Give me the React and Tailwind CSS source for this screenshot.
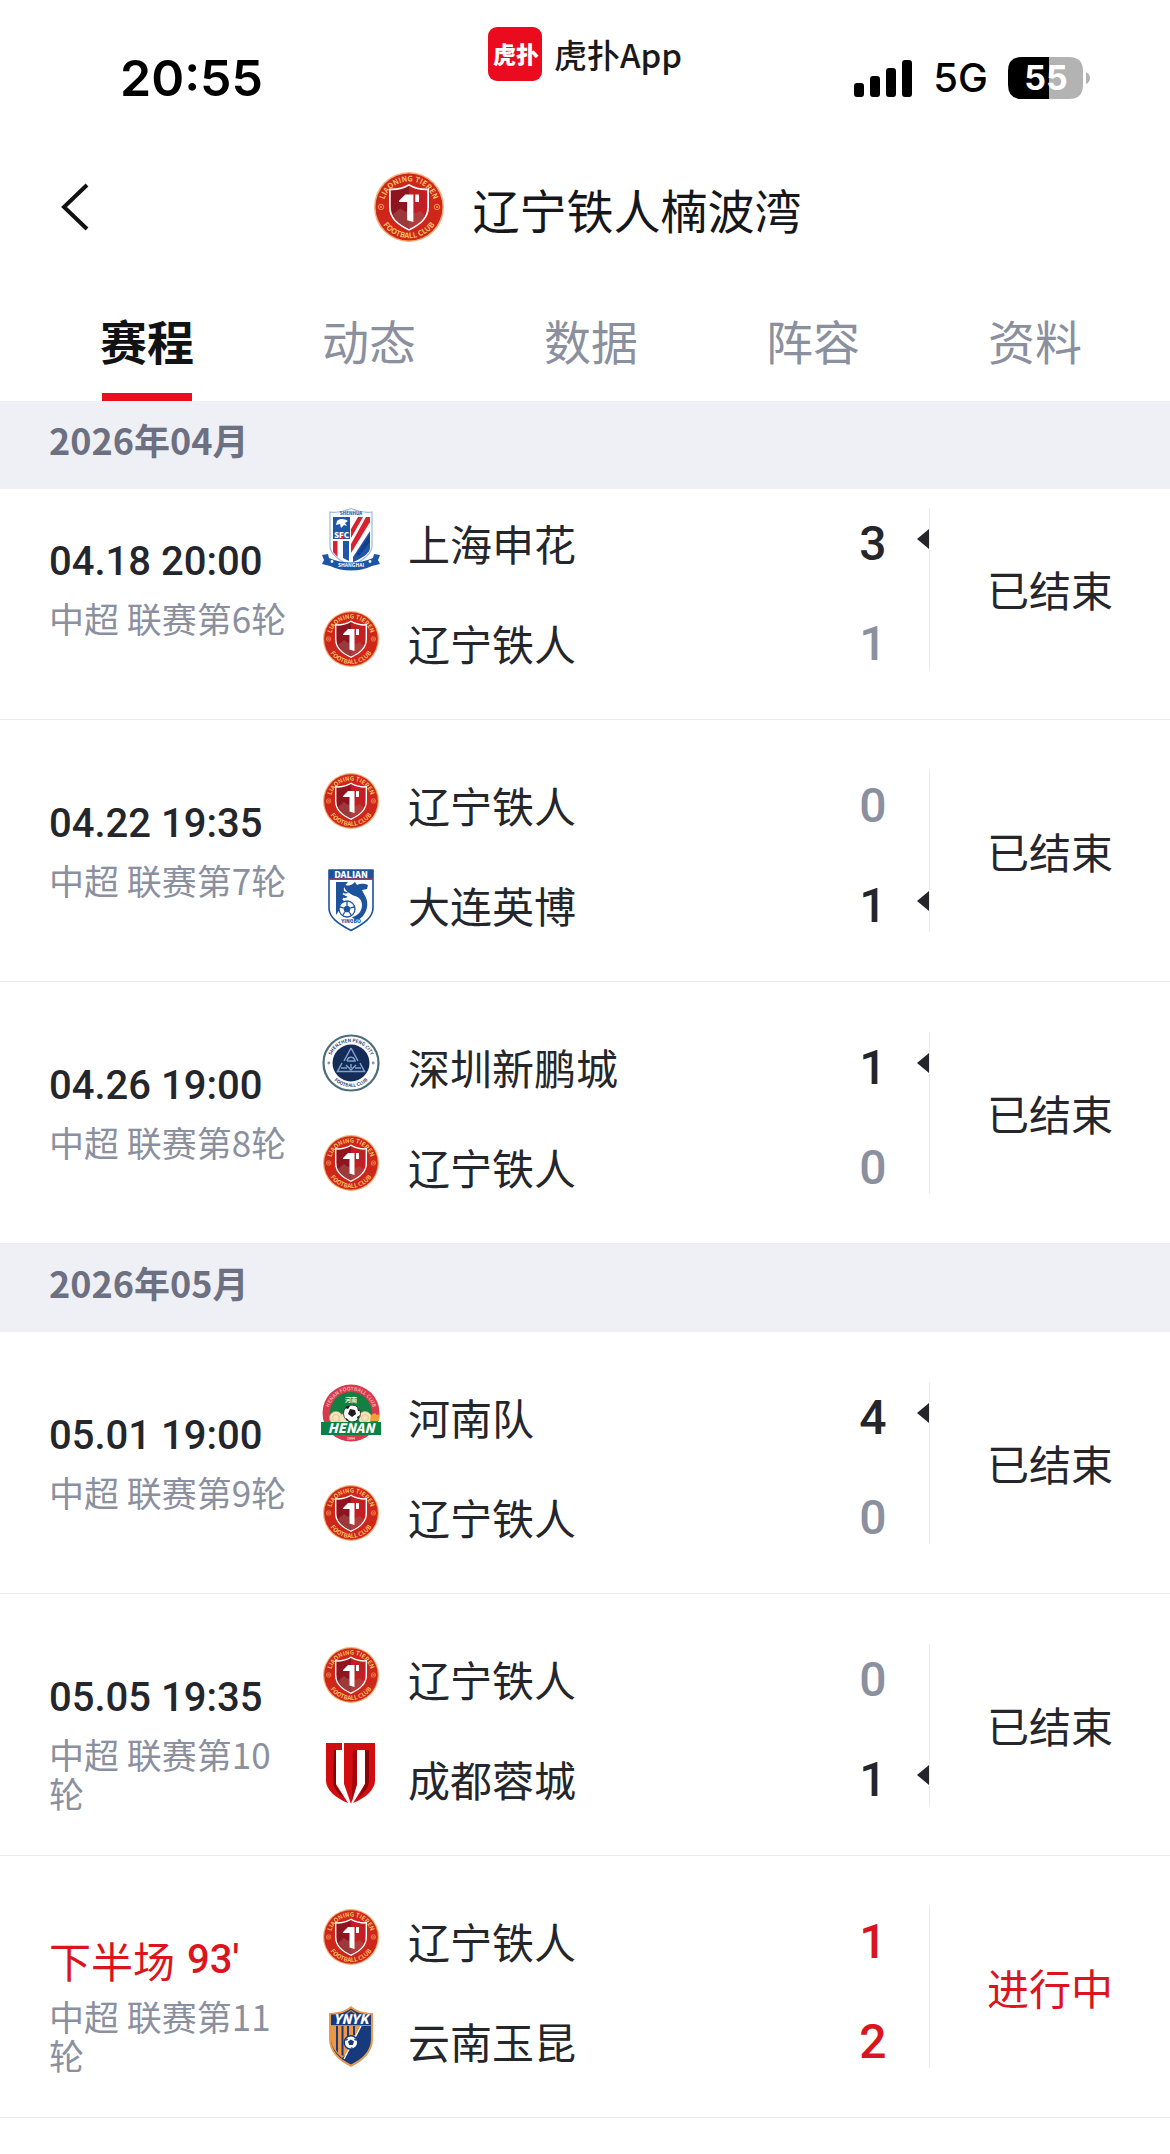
import { useId, useState } from 'react';

const TABS = ['赛程', '动态', '数据', '阵容', '资料'];

const MONTHS = [
  {
    title: '2026年04月',
    matches: [
      {
        time: '04.18 20:00', round: '中超 联赛第6轮', status: '已结束',
        teams: [
          { name: '上海申花', crest: 'shenhua', score: 3, win: true },
          { name: '辽宁铁人', crest: 'liaoning', score: 1 },
        ],
      },
      {
        time: '04.22 19:35', round: '中超 联赛第7轮', status: '已结束',
        teams: [
          { name: '辽宁铁人', crest: 'liaoning', score: 0 },
          { name: '大连英博', crest: 'dalian', score: 1, win: true },
        ],
      },
      {
        time: '04.26 19:00', round: '中超 联赛第8轮', status: '已结束',
        teams: [
          { name: '深圳新鹏城', crest: 'shenzhen', score: 1, win: true },
          { name: '辽宁铁人', crest: 'liaoning', score: 0 },
        ],
      },
    ],
  },
  {
    title: '2026年05月',
    matches: [
      {
        time: '05.01 19:00', round: '中超 联赛第9轮', status: '已结束',
        teams: [
          { name: '河南队', crest: 'henan', score: 4, win: true },
          { name: '辽宁铁人', crest: 'liaoning', score: 0 },
        ],
      },
      {
        time: '05.05 19:35', round: '中超 联赛第10轮', status: '已结束',
        teams: [
          { name: '辽宁铁人', crest: 'liaoning', score: 0 },
          { name: '成都蓉城', crest: 'chengdu', score: 1, win: true },
        ],
      },
      {
        phase: '下半场', time: "93'", round: '中超 联赛第11轮', status: '进行中', live: true,
        teams: [
          { name: '辽宁铁人', crest: 'liaoning', score: 1 },
          { name: '云南玉昆', crest: 'yunnan', score: 2 },
        ],
      },
    ],
  },
];

function Liaoning() {
  const id = useId();
  return (
    <>
      <circle cx="32" cy="32" r="28" fill="#f3b073" />
      <circle cx="32" cy="32" r="26.8" fill="#cf261b" />
      <path id={`${id}t`} d="M11.5 32a20.5 20.5 0 0 1 41 0" fill="none" />
      <path id={`${id}b`} d="M7 32a25 25 0 0 0 50 0" fill="none" />
      <g fill="#f6c062" fontSize="6" fontWeight="600" textAnchor="middle">
        <text><textPath href={`#${id}t`} startOffset="50%">LIAONING TIEREN</textPath></text>
        <text><textPath href={`#${id}b`} startOffset="50%">FOOTBALL CLUB</textPath></text>
      </g>
      <g fill="none" stroke="#f0a04f" strokeWidth=".7">
        <circle cx="9.6" cy="32" r="2.2" />
        <circle cx="54.4" cy="32" r="2.2" />
        <path d="M8.5 31l2 2m0-2l-2 2M53.5 31l2 2m0-2l-2 2" />
      </g>
      <path d="M32 13.5c5 3 10 4 16 3.6V32c0 9-6 14-16 19-10-5-16-10-16-19V17.100c6 .4 11-.6 16-3.600z" fill="#fff" />
      <path d="M32 15c5 3 10 3.800 14.600 3.600V32c0 8-5 13-14.600 17.500z" fill="#c21f25" />
      <path d="M32 15c-5 3-10 3.800-14.600 3.600V32c0 8 5 13 14.600 17.500z" fill="#8e1520" />
      <path d="M19 38l6-5 4 3 3-2 5 3 4-2 4 4-4 5-9 5-8-4z" fill="#a5524f" opacity=".6" />
      <path d="M24 27l5-5h6.500v22l-5-1.500V28H24z" fill="#fff" />
      <path d="M37 22h3v6h-3z" fill="#fff" />
    </>
  );
}

function Shenhua() {
  return (
    <>
      <path d="M11 5c7 1 15-1 21-3.500C38 4 46 6 53 5v34c0 8-8 14-21 20C19 53 11 47 11 39z" fill="#fff" stroke="#9db8de" strokeWidth="1.200" />
      <path d="M22 4.500h20v3.600H22z" fill="#dfe8f5" />
      <text x="32" y="8" fontSize="4.600" fontWeight="700" textAnchor="middle" fill="#2a57a0">SHENHUA</text>
      <path d="M14 10h17v22H14z" fill="#1f56a8" />
      <path d="M18 14c3-3 8-2 11 0l-3 2 2 3-3-1-3 3-1-4-4 1z" fill="#fff" />
      <path d="M20 25h5v7h-5z" fill="#d8232f" />
      <text x="22.500" y="31" fontSize="8" fontWeight="900" textAnchor="middle" fill="#fff">SFC</text>
      <path d="M14 34h4.500v16L14 45z" fill="#d8232f" />
      <path d="M24 34h6v20l-6-3z" fill="#1f56a8" />
      <path d="M39 10h5L32 31v-9zM47 10h4v5L32 46v-9z" fill="#d8232f" />
      <path d="M51 24v17c0 4-5 9-17 14V50z" fill="#1f56a8" />
      <path d="M51 27v8L40 49l-3-1z" fill="#123f8a" />
      <path d="M3 48l6-1 1 4c14 6 30 6 44 0l1-4 6 1-2 5 2 4-8 2c-13 6-29 6-42 0l-8-2 2-4z" fill="#1c55a5" />
      <text x="32" y="60" fontSize="5" fontWeight="700" textAnchor="middle" fill="#fff">SHANGHAI</text>
      <circle cx="13" cy="54.500" r="1.400" fill="#fff" />
      <circle cx="51" cy="54.500" r="1.400" fill="#fff" />
    </>
  );
}

function Dalian() {
  return (
    <>
      <path d="M10 1h44v38c0 9-8 15-22 22.500C18 54 10 48 10 39z" fill="#fff" stroke="#1c539c" strokeWidth="1.600" strokeLinejoin="round" />
      <path d="M10 1h44v9H10z" fill="#1c539c" />
      <path d="M10 9.500h44v1.600H10z" fill="#d42a48" />
      <text x="32" y="8.500" fontSize="9" fontWeight="900" textAnchor="middle" fill="#fff">DALIAN</text>
      <path d="M17 13h12c-3 3-5 6-4 9l5 2-7 1 6 3-6 2 3 3c-4 0-6 3-5 7l-4 6z" fill="#1c539c" />
      <path d="M24 14c4 4 8 3 12-1l2 3c5-2 8-1 11 0l-1 4-5 1 2 4c5 7 4 16-1 22-4 5-9 4-11 1 6-1 10-6 10-12 0-5-3-8-7-9-6-2-11-6-12-13z" fill="#1c539c" />
      <path d="M24 24c5 4 10 5 15 6M24 29c5 3 9 4 14 5" stroke="#fff" strokeWidth="1" fill="none" />
      <circle cx="28" cy="40" r="8" fill="#fff" stroke="#1c539c" strokeWidth="1.300" />
      <path d="M28 36l3.800 2.800-1.400 4.400h-4.800l-1.400-4.400z" fill="#1c539c" />
      <path d="M28 32.500V36M35 38l-3.200.8M32 46l-1.600-2.800M24 46l1.600-2.800M21 38l3.200.8" stroke="#1c539c" strokeWidth="1.300" />
      <text x="32" y="54" fontSize="5" fontWeight="800" textAnchor="middle" fill="#1c539c">YINGBO</text>
    </>
  );
}

function Shenzhen() {
  const id = useId();
  return (
    <>
      <circle cx="32" cy="32" r="27.500" fill="#fff" stroke="#4d6e79" strokeWidth="2.200" />
      <circle cx="32" cy="32" r="18.500" fill="#162c58" />
      <path id={`${id}t`} d="M11 32a21 21 0 0 1 42 0" fill="none" />
      <path id={`${id}b`} d="M8 32a24 24 0 0 0 48 0" fill="none" />
      <g fill="#33436a" fontSize="4.600" fontWeight="700" textAnchor="middle">
        <text><textPath href={`#${id}t`} startOffset="50%">SHENZHEN PENG CITY</textPath></text>
        <text><textPath href={`#${id}b`} startOffset="50%">FOOTBALL CLUB</textPath></text>
      </g>
      <circle cx="9.800" cy="32" r="1.400" fill="#8796ab" />
      <circle cx="54.200" cy="32" r="1.400" fill="#8796ab" />
      <g fill="none" stroke="#7fa3cf" strokeWidth="1.500">
        <path d="M32 17l-7 13M32 17l7 13M23 32l-4.500 8.500h27L41 32M22 37h6M36 37h6" />
        <path d="M28 30c1-5 7-5 8 0l-8 0M27 34l5 5 5-5M32 33v4" />
      </g>
    </>
  );
}

function Henan() {
  const id = useId();
  return (
    <>
      <circle cx="32" cy="32" r="28.500" fill="#d8394f" />
      <circle cx="32" cy="32" r="21" fill="#118043" />
      <path id={`${id}t`} d="M9.500 32a22.500 22.500 0 0 1 45 0" fill="none" />
      <text fill="#f3a9a7" fontSize="5" fontWeight="600" textAnchor="middle">
        <textPath href={`#${id}t`} startOffset="50%">HENAN FOOTBALL CLUB</textPath>
      </text>
      <text x="32" y="21" fontSize="6" fontWeight="700" textAnchor="middle" fill="#fff">河南</text>
      <g fill="#f5e3bd" stroke="#d9b270" strokeWidth=".6">
        <circle cx="17" cy="37" r="6.500" />
        <circle cx="17" cy="37" r="3.500" />
        <circle cx="46" cy="37" r="6.500" />
        <circle cx="46" cy="37" r="3.500" />
        <circle cx="25" cy="38" r="5" />
      </g>
      <path d="M52 34l4-2 2 2 3-1-1 7h-9z" fill="#f0a13d" />
      <circle cx="33" cy="32.500" r="8.500" fill="#fff" stroke="#222" strokeWidth=".8" />
      <path d="M31 28l5 1 1 4-4 3-4-3zM26 27l2-2 3 0-2 3zM38 26l3 4-2 0zM38 36l3-2-2 5zM27 37l4 3-4-1z" fill="#1d1d1d" />
      <path d="M2 41h60v13H2z" fill="#0b8145" />
      <text x="32" y="52" fontSize="13" fontWeight="900" fontStyle="italic" textAnchor="middle" fill="#fff">HENAN</text>
      <text x="32" y="59" fontSize="3.600" textAnchor="middle" fill="#fff">1994</text>
    </>
  );
}

function Chengdu() {
  return (
    <>
      <path d="M7 0h16v7h-6v34l12 19C16 55 7 46 7 38z" fill="#d20d12" />
      <path d="M15 7h2v36l8 12C18 49 14 44 14 38z" fill="#7d0408" />
      <path d="M25 0h31v38c0 8-9 17-22 22l12-19V7h-8v34l-6 20-7-20z" fill="#d20d12" />
      <path d="M46 7h4v31c0 6-5 12-11 17l7-14z" fill="#8b0508" />
      <path d="M34 7h4v34l-5 17z" fill="#a3070b" />
    </>
  );
}

function Yunnan() {
  return (
    <>
      <path d="M32 1c6 5 14 7 22 7v26c0 13-10 22-22 28C20 56 10 47 10 34V8c8 0 16-2 22-7z" fill="#e59a4c" />
      <path d="M32 3.500c6 4.500 13 6 20 6V34c0 12-9 20-20 25.500C21 54 12 46 12 34V9.500c7 0 14-1.500 20-6z" fill="#173a7d" />
      <path d="M12 21h30L27 50l-4 3C16 47 12 41 12 34z" fill="#ef9645" />
      <path d="M17 21h2v27l-2-3zM22.500 21h2v30l-2-1zM28 21h2v17h-2zM34 21h2v9h-2z" fill="#173a7d" />
      <path d="M42 21L25 54" stroke="#fff" strokeWidth="1.300" />
      <path d="M12 20.500h40" stroke="#9db0d5" strokeWidth=".8" />
      <path d="M27 9l5-3.500L37 9" fill="none" stroke="#b9854e" strokeWidth="1.200" />
      <text x="32" y="19" fontSize="13" fontWeight="800" fontStyle="italic" textAnchor="middle" fill="#fff">YNYK</text>
      <circle cx="32" cy="37.500" r="6.800" fill="#fff" stroke="#173a7d" strokeWidth="1.500" />
      <path d="M32 34.500l3 2.100-1.200 3.500h-3.600L29 36.600zM26 36l2-3 1 2zM38 36l-2-3-1 2zM31 43.500h3l-1-1.500z" fill="#173a7d" />
    </>
  );
}

const CRESTS = {
  liaoning: Liaoning,
  shenhua: Shenhua,
  dalian: Dalian,
  shenzhen: Shenzhen,
  henan: Henan,
  chengdu: Chengdu,
  yunnan: Yunnan,
};

function Crest({ team, className }) {
  const Art = CRESTS[team];
  return (
    <svg viewBox="0 0 64 64" className={`${className} shrink-0`} aria-hidden="true">
      <Art />
    </svg>
  );
}

function StatusBar() {
  return (
    <div className="grid grid-cols-[1fr_auto_1fr] items-start h-[132px] text-black">
      <div className="mt-12 pl-[120px] text-[50px] leading-[60px] font-semibold font-[Inter,sans-serif]">20:55</div>

      <div className="mt-[27px] flex items-center gap-3">
        <svg viewBox="0 0 54 54" className="w-[54px] h-[54px]" aria-hidden="true">
          <rect width="54" height="54" rx="9" fill="#eb0b1e" />
          <text x="28" y="36" fontSize="23" fontWeight="900" textAnchor="middle" fill="#fff">虎扑</text>
        </svg>
        <span className="text-[33px] leading-[54px] font-medium text-[#1a1a1a]">虎扑App</span>
      </div>

      <div className="mt-12 h-[60px] pr-[78px] flex items-center justify-end">
        <svg viewBox="0 0 59 38" className="w-[59px] h-[38px]" aria-hidden="true">
          <rect x="0" y="24" width="10" height="14" rx="3" />
          <rect x="16" y="17" width="10" height="21" rx="3" />
          <rect x="32" y="9" width="10" height="29" rx="3" />
          <rect x="48" y="1" width="10" height="37" rx="3" />
        </svg>
        <span className="ml-5 text-[40px] font-medium font-[Inter,sans-serif]">5G</span>
        <svg viewBox="0 0 84 42" className="ml-5 w-[84px] h-[42px]" role="img" aria-label="电量 55%">
          <path d="M42 0H14Q0 0 0 14V28Q0 42 14 42H42z" />
          <path d="M41 0H61Q75 0 75 14V28Q75 42 61 42H41z" fill="#b3b3b3" />
          <path d="M78 15q4 2 4 6t-4 6z" fill="#b3b3b3" />
          <text x="38" y="33" fontSize="34" fontWeight="700" textAnchor="middle" fill="#fff" className="font-[Inter,sans-serif]">55</text>
        </svg>
      </div>
    </div>
  );
}

function TitleBar() {
  return (
    <header className="grid grid-cols-[1fr_auto_1fr] items-center h-[150px]">
      <button type="button" aria-label="返回" className="justify-self-start pl-[60px]">
        <svg viewBox="0 0 30 48" className="w-[30px] h-12" fill="none" stroke="#111" strokeWidth="4">
          <path d="M27 2L4 24l23 22" />
        </svg>
      </button>
      <div className="flex items-center gap-6">
        <Crest team="liaoning" className="w-20 h-20" />
        <h1 className="pt-1 text-[47px] leading-[60px] text-[#16171a]">辽宁铁人楠波湾</h1>
      </div>
    </header>
  );
}

function Tabs() {
  const [active, setActive] = useState(TABS[0]);
  return (
    <div role="tablist" className="flex pl-9 pr-6">
      {TABS.map(tab => (
        <button
          key={tab}
          type="button"
          role="tab"
          aria-selected={tab === active}
          onClick={() => setActive(tab)}
          className={`flex-1 h-[119px] pt-7 flex flex-col items-center justify-between text-[47px] leading-[60px] ${
            tab === active ? 'font-bold text-[#111214]' : 'text-[#8b909f]'
          }`}
        >
          {tab}
          <span className={`w-[90px] h-2 ${tab === active ? 'bg-[#ea0e20]' : ''}`} />
        </button>
      ))}
    </div>
  );
}

function scoreColor(live, win) {
  if (live) return 'text-[#dc1420]';
  return win ? 'text-[#24262b]' : 'text-[#8b909f]';
}

function TeamLine({ team, live }) {
  return (
    <div className="flex items-center h-[100px]">
      <Crest team={team.crest} className="w-16 h-16" />
      <span className="flex-1 pl-[25px] pt-2 text-[42px] leading-[50px] text-[#24262b]">{team.name}</span>
      <span className={`w-[60px] pt-2.5 text-center text-[48px] leading-[50px] font-medium font-[Roboto,sans-serif] ${scoreColor(live, team.win)}`}>
        {team.score}
      </span>
      <span className="w-[26px] flex justify-end">
        {team.win && (
          <svg viewBox="0 0 12 20" className="w-3 h-5" fill="#24262b" aria-label="胜">
            <path d="M12 0v20L0 10z" />
          </svg>
        )}
      </span>
    </div>
  );
}

function MatchRow({ match }) {
  const { phase, time, round, status, live, teams } = match;
  return (
    <li className="flex h-[262px] bg-white border-b border-[#ececef]">
      <div className="w-[290px] pl-[49px] pt-20">
        <p className={`flex items-center gap-3 h-12 ${live ? 'text-[#dc1420]' : 'text-[#24262b]'}`}>
          {phase && <span className="text-[42px] leading-[42px]">{phase}</span>}
          <time className="text-[40px] font-medium font-[Roboto,sans-serif]">{time}</time>
        </p>
        <p className="mt-3 text-[35px] leading-[39px] text-[#8b909f]">{round}</p>
      </div>
      <div className="flex-1 pl-[29px] flex flex-col justify-center">
        {teams.map(t => <TeamLine key={t.name} team={t} live={live} />)}
      </div>
      <div className="w-px h-[162px] self-center bg-[#ececef]" />
      <p className={`w-60 self-center text-center text-[42px] leading-[50px] ${live ? 'text-[#dc1420]' : 'text-[#24262b]'}`}>
        {status}
      </p>
    </li>
  );
}

export default function App() {
  return (
    <div className="min-h-screen bg-white font-['Noto_Sans_CJK_SC',sans-serif]">
      <StatusBar />
      <TitleBar />
      <Tabs />
      <main>
        {MONTHS.map((month, i) => (
          <section key={month.title}>
            <h2 className="relative z-10 h-[88px] pt-4 pl-[49px] bg-[#eff0f5] text-[36px] leading-[44px] font-bold text-[#6c7080]">
              {month.title}
            </h2>
            {/* first month is scrolled slightly under its heading */}
            <ul className={i === 0 ? '-mt-[31px]' : ''}>
              {month.matches.map(m => <MatchRow key={m.round} match={m} />)}
            </ul>
          </section>
        ))}
      </main>
    </div>
  );
}
